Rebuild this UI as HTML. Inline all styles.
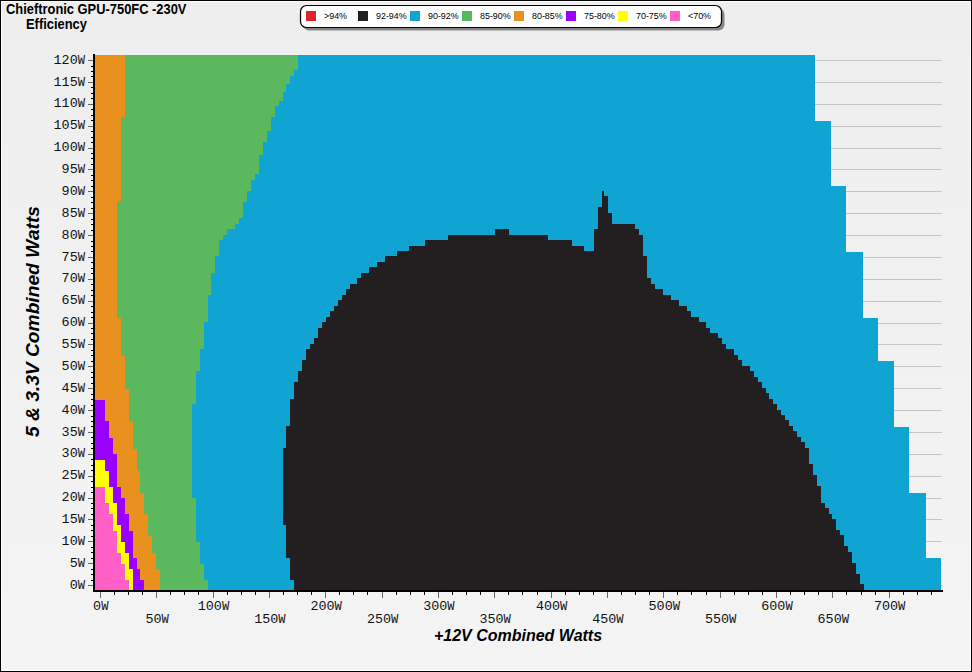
<!DOCTYPE html>
<html><head><meta charset="utf-8"><title>Chieftronic GPU-750FC Efficiency</title>
<style>html,body{margin:0;padding:0;width:972px;height:672px;overflow:hidden;background:#f0f0f0}
body{position:relative;font-family:"Liberation Sans",sans-serif}</style></head>
<body>
<svg width="972" height="672" viewBox="0 0 972 672" style="position:absolute;left:0;top:0">
<defs><linearGradient id="bg" x1="0" y1="0" x2="0" y2="1"><stop offset="0" stop-color="#eeeeee"/><stop offset="1" stop-color="#f4f4f4"/></linearGradient></defs>
<rect x="0" y="0" width="972" height="672" fill="url(#bg)"/>
<rect x="0.5" y="0.5" width="971" height="671" fill="none" stroke="#000" stroke-width="1"/>
<rect x="1.5" y="1.5" width="969" height="669" fill="none" stroke="#fff" stroke-width="1"/>
<g shape-rendering="crispEdges">
<rect x="95" y="585" width="847" height="1" fill="#c4c4c4"/>
<rect x="95" y="563" width="847" height="1" fill="#c4c4c4"/>
<rect x="95" y="541" width="847" height="1" fill="#c4c4c4"/>
<rect x="95" y="519" width="847" height="1" fill="#c4c4c4"/>
<rect x="95" y="498" width="847" height="1" fill="#c4c4c4"/>
<rect x="95" y="476" width="847" height="1" fill="#c4c4c4"/>
<rect x="95" y="454" width="847" height="1" fill="#c4c4c4"/>
<rect x="95" y="432" width="847" height="1" fill="#c4c4c4"/>
<rect x="95" y="410" width="847" height="1" fill="#c4c4c4"/>
<rect x="95" y="388" width="847" height="1" fill="#c4c4c4"/>
<rect x="95" y="366" width="847" height="1" fill="#c4c4c4"/>
<rect x="95" y="344" width="847" height="1" fill="#c4c4c4"/>
<rect x="95" y="323" width="847" height="1" fill="#c4c4c4"/>
<rect x="95" y="301" width="847" height="1" fill="#c4c4c4"/>
<rect x="95" y="279" width="847" height="1" fill="#c4c4c4"/>
<rect x="95" y="257" width="847" height="1" fill="#c4c4c4"/>
<rect x="95" y="235" width="847" height="1" fill="#c4c4c4"/>
<rect x="95" y="213" width="847" height="1" fill="#c4c4c4"/>
<rect x="95" y="191" width="847" height="1" fill="#c4c4c4"/>
<rect x="95" y="169" width="847" height="1" fill="#c4c4c4"/>
<rect x="95" y="148" width="847" height="1" fill="#c4c4c4"/>
<rect x="95" y="126" width="847" height="1" fill="#c4c4c4"/>
<rect x="95" y="104" width="847" height="1" fill="#c4c4c4"/>
<rect x="95" y="82" width="847" height="1" fill="#c4c4c4"/>
<rect x="95" y="60" width="847" height="1" fill="#c4c4c4"/>
</g>
<g shape-rendering="crispEdges">
<path d="M95,55 H815 V121 H831 V186 H846 V252 H863 V318 H878 V361 H894 V427 H909 V493 H926 V558 H941 V590 H95 Z" fill="#10a4d3"/>
<path d="M95,55 H298 V70 H294 V76 H290 V84 H286 V92 H283 V101 H279 V106 H275 V117 H271 V131 H267 V142 H263 V155 H259 V174 H255 V180 H251 V191 H247 V202 H243 V218 H239 V224 H235 V229 H227 V235 H223 V240 H219 V256 H215 V273 H211 V295 H208 V322 H204 V349 H200 V371 H196 V404 H192 V498 H196 V542 H200 V564 H204 V580 H208 V590 H95 Z" fill="#5cb85d"/>
<path d="M95,55 H125 V117 H121 V201 H117 V318 H121 V356 H125 V389 H129 V421 H133 V449 H137 V471 H140 V493 H144 V514 H148 V536 H152 V553 H156 V569 H160 V590 H95 Z" fill="#e8911f"/>
<path d="M95,400 H105 V421 H109 V438 H113 V454 H117 V487 H121 V498 H125 V514 H129 V531 H133 V558 H137 V569 H140 V580 H144 V590 H95 Z" fill="#9900ff"/>
<path d="M95,460 H105 V471 H109 V487 H113 V503 H117 V525 H121 V542 H125 V553 H129 V569 H133 V590 H95 Z" fill="#ffff00"/>
<path d="M95,487 H105 V503 H109 V514 H113 V531 H117 V553 H121 V564 H125 V580 H129 V590 H95 Z" fill="#ff5fc7"/>
<path d="M294,590 V580 H290 V558 H286 V525 H283 V448 H286 V426 H290 V399 H294 V382 H298 V371 H302 V360 H306 V349 H310 V344 H314 V338 H318 V328 H322 V322 H326 V317 H330 V311 H334 V306 H338 V300 H342 V295 H346 V289 H350 V284 H357 V278 H361 V273 H369 V267 H377 V262 H385 V256 H397 V251 H409 V246 H425 V240 H448 V235 H495 V229 H509 V235 H548 V240 H572 V246 H584 V251 H594 V229 H598 V207 H602 V191 H604 V196 H608 V213 H612 V224 H635 V229 H639 V235 H643 V256 H647 V278 H651 V284 H655 V289 H663 V295 H671 V300 H679 V306 H687 V311 H691 V317 H699 V322 H706 V328 H710 V333 H718 V338 H722 V344 H726 V349 H734 V355 H738 V360 H742 V366 H750 V371 H754 V377 H758 V382 H762 V388 H766 V393 H769 V399 H773 V404 H777 V410 H781 V415 H785 V420 H789 V426 H793 V431 H797 V437 H801 V442 H805 V448 H809 V464 H813 V475 H817 V486 H821 V503 H825 V508 H829 V514 H832 V519 H836 V530 H840 V535 H844 V546 H848 V552 H852 V563 H856 V574 H860 V584 H864 V590 Z" fill="#231f20"/>
</g>
<g shape-rendering="crispEdges">
<rect x="93" y="54" width="2" height="538" fill="#000"/>
<rect x="93" y="590" width="850" height="2" fill="#000"/>
<rect x="88" y="585" width="5" height="1" fill="#666"/>
<rect x="91" y="580" width="2" height="1" fill="#000"/>
<rect x="91" y="574" width="2" height="1" fill="#000"/>
<rect x="91" y="569" width="2" height="1" fill="#000"/>
<rect x="88" y="563" width="5" height="1" fill="#666"/>
<rect x="91" y="558" width="2" height="1" fill="#000"/>
<rect x="91" y="552" width="2" height="1" fill="#000"/>
<rect x="91" y="547" width="2" height="1" fill="#000"/>
<rect x="88" y="541" width="5" height="1" fill="#666"/>
<rect x="91" y="536" width="2" height="1" fill="#000"/>
<rect x="91" y="530" width="2" height="1" fill="#000"/>
<rect x="91" y="525" width="2" height="1" fill="#000"/>
<rect x="88" y="519" width="5" height="1" fill="#666"/>
<rect x="91" y="514" width="2" height="1" fill="#000"/>
<rect x="91" y="508" width="2" height="1" fill="#000"/>
<rect x="91" y="503" width="2" height="1" fill="#000"/>
<rect x="88" y="498" width="5" height="1" fill="#666"/>
<rect x="91" y="492" width="2" height="1" fill="#000"/>
<rect x="91" y="487" width="2" height="1" fill="#000"/>
<rect x="91" y="481" width="2" height="1" fill="#000"/>
<rect x="88" y="476" width="5" height="1" fill="#666"/>
<rect x="91" y="470" width="2" height="1" fill="#000"/>
<rect x="91" y="465" width="2" height="1" fill="#000"/>
<rect x="91" y="459" width="2" height="1" fill="#000"/>
<rect x="88" y="454" width="5" height="1" fill="#666"/>
<rect x="91" y="448" width="2" height="1" fill="#000"/>
<rect x="91" y="443" width="2" height="1" fill="#000"/>
<rect x="91" y="437" width="2" height="1" fill="#000"/>
<rect x="88" y="432" width="5" height="1" fill="#666"/>
<rect x="91" y="426" width="2" height="1" fill="#000"/>
<rect x="91" y="421" width="2" height="1" fill="#000"/>
<rect x="91" y="416" width="2" height="1" fill="#000"/>
<rect x="88" y="410" width="5" height="1" fill="#666"/>
<rect x="91" y="405" width="2" height="1" fill="#000"/>
<rect x="91" y="399" width="2" height="1" fill="#000"/>
<rect x="91" y="394" width="2" height="1" fill="#000"/>
<rect x="88" y="388" width="5" height="1" fill="#666"/>
<rect x="91" y="383" width="2" height="1" fill="#000"/>
<rect x="91" y="377" width="2" height="1" fill="#000"/>
<rect x="91" y="372" width="2" height="1" fill="#000"/>
<rect x="88" y="366" width="5" height="1" fill="#666"/>
<rect x="91" y="361" width="2" height="1" fill="#000"/>
<rect x="91" y="355" width="2" height="1" fill="#000"/>
<rect x="91" y="350" width="2" height="1" fill="#000"/>
<rect x="88" y="344" width="5" height="1" fill="#666"/>
<rect x="91" y="339" width="2" height="1" fill="#000"/>
<rect x="91" y="333" width="2" height="1" fill="#000"/>
<rect x="91" y="328" width="2" height="1" fill="#000"/>
<rect x="88" y="323" width="5" height="1" fill="#666"/>
<rect x="91" y="317" width="2" height="1" fill="#000"/>
<rect x="91" y="312" width="2" height="1" fill="#000"/>
<rect x="91" y="306" width="2" height="1" fill="#000"/>
<rect x="88" y="301" width="5" height="1" fill="#666"/>
<rect x="91" y="295" width="2" height="1" fill="#000"/>
<rect x="91" y="290" width="2" height="1" fill="#000"/>
<rect x="91" y="284" width="2" height="1" fill="#000"/>
<rect x="88" y="279" width="5" height="1" fill="#666"/>
<rect x="91" y="273" width="2" height="1" fill="#000"/>
<rect x="91" y="268" width="2" height="1" fill="#000"/>
<rect x="91" y="262" width="2" height="1" fill="#000"/>
<rect x="88" y="257" width="5" height="1" fill="#666"/>
<rect x="91" y="251" width="2" height="1" fill="#000"/>
<rect x="91" y="246" width="2" height="1" fill="#000"/>
<rect x="91" y="241" width="2" height="1" fill="#000"/>
<rect x="88" y="235" width="5" height="1" fill="#666"/>
<rect x="91" y="230" width="2" height="1" fill="#000"/>
<rect x="91" y="224" width="2" height="1" fill="#000"/>
<rect x="91" y="219" width="2" height="1" fill="#000"/>
<rect x="88" y="213" width="5" height="1" fill="#666"/>
<rect x="91" y="208" width="2" height="1" fill="#000"/>
<rect x="91" y="202" width="2" height="1" fill="#000"/>
<rect x="91" y="197" width="2" height="1" fill="#000"/>
<rect x="88" y="191" width="5" height="1" fill="#666"/>
<rect x="91" y="186" width="2" height="1" fill="#000"/>
<rect x="91" y="180" width="2" height="1" fill="#000"/>
<rect x="91" y="175" width="2" height="1" fill="#000"/>
<rect x="88" y="169" width="5" height="1" fill="#666"/>
<rect x="91" y="164" width="2" height="1" fill="#000"/>
<rect x="91" y="158" width="2" height="1" fill="#000"/>
<rect x="91" y="153" width="2" height="1" fill="#000"/>
<rect x="88" y="148" width="5" height="1" fill="#666"/>
<rect x="91" y="142" width="2" height="1" fill="#000"/>
<rect x="91" y="137" width="2" height="1" fill="#000"/>
<rect x="91" y="131" width="2" height="1" fill="#000"/>
<rect x="88" y="126" width="5" height="1" fill="#666"/>
<rect x="91" y="120" width="2" height="1" fill="#000"/>
<rect x="91" y="115" width="2" height="1" fill="#000"/>
<rect x="91" y="109" width="2" height="1" fill="#000"/>
<rect x="88" y="104" width="5" height="1" fill="#666"/>
<rect x="91" y="98" width="2" height="1" fill="#000"/>
<rect x="91" y="93" width="2" height="1" fill="#000"/>
<rect x="91" y="87" width="2" height="1" fill="#000"/>
<rect x="88" y="82" width="5" height="1" fill="#666"/>
<rect x="91" y="76" width="2" height="1" fill="#000"/>
<rect x="91" y="71" width="2" height="1" fill="#000"/>
<rect x="91" y="66" width="2" height="1" fill="#000"/>
<rect x="88" y="60" width="5" height="1" fill="#666"/>
<rect x="100" y="592" width="1" height="6" fill="#666"/>
<rect x="114" y="592" width="1" height="3" fill="#000"/>
<rect x="128" y="592" width="1" height="3" fill="#000"/>
<rect x="142" y="592" width="1" height="3" fill="#000"/>
<rect x="156" y="592" width="1" height="6" fill="#666"/>
<rect x="170" y="592" width="1" height="3" fill="#000"/>
<rect x="184" y="592" width="1" height="3" fill="#000"/>
<rect x="198" y="592" width="1" height="3" fill="#000"/>
<rect x="213" y="592" width="1" height="6" fill="#666"/>
<rect x="227" y="592" width="1" height="3" fill="#000"/>
<rect x="241" y="592" width="1" height="3" fill="#000"/>
<rect x="255" y="592" width="1" height="3" fill="#000"/>
<rect x="269" y="592" width="1" height="6" fill="#666"/>
<rect x="283" y="592" width="1" height="3" fill="#000"/>
<rect x="297" y="592" width="1" height="3" fill="#000"/>
<rect x="311" y="592" width="1" height="3" fill="#000"/>
<rect x="325" y="592" width="1" height="6" fill="#666"/>
<rect x="339" y="592" width="1" height="3" fill="#000"/>
<rect x="353" y="592" width="1" height="3" fill="#000"/>
<rect x="367" y="592" width="1" height="3" fill="#000"/>
<rect x="382" y="592" width="1" height="6" fill="#666"/>
<rect x="396" y="592" width="1" height="3" fill="#000"/>
<rect x="410" y="592" width="1" height="3" fill="#000"/>
<rect x="424" y="592" width="1" height="3" fill="#000"/>
<rect x="438" y="592" width="1" height="6" fill="#666"/>
<rect x="452" y="592" width="1" height="3" fill="#000"/>
<rect x="466" y="592" width="1" height="3" fill="#000"/>
<rect x="480" y="592" width="1" height="3" fill="#000"/>
<rect x="494" y="592" width="1" height="6" fill="#666"/>
<rect x="508" y="592" width="1" height="3" fill="#000"/>
<rect x="522" y="592" width="1" height="3" fill="#000"/>
<rect x="537" y="592" width="1" height="3" fill="#000"/>
<rect x="551" y="592" width="1" height="6" fill="#666"/>
<rect x="565" y="592" width="1" height="3" fill="#000"/>
<rect x="579" y="592" width="1" height="3" fill="#000"/>
<rect x="593" y="592" width="1" height="3" fill="#000"/>
<rect x="607" y="592" width="1" height="6" fill="#666"/>
<rect x="621" y="592" width="1" height="3" fill="#000"/>
<rect x="635" y="592" width="1" height="3" fill="#000"/>
<rect x="649" y="592" width="1" height="3" fill="#000"/>
<rect x="663" y="592" width="1" height="6" fill="#666"/>
<rect x="677" y="592" width="1" height="3" fill="#000"/>
<rect x="691" y="592" width="1" height="3" fill="#000"/>
<rect x="706" y="592" width="1" height="3" fill="#000"/>
<rect x="720" y="592" width="1" height="6" fill="#666"/>
<rect x="734" y="592" width="1" height="3" fill="#000"/>
<rect x="748" y="592" width="1" height="3" fill="#000"/>
<rect x="762" y="592" width="1" height="3" fill="#000"/>
<rect x="776" y="592" width="1" height="6" fill="#666"/>
<rect x="790" y="592" width="1" height="3" fill="#000"/>
<rect x="804" y="592" width="1" height="3" fill="#000"/>
<rect x="818" y="592" width="1" height="3" fill="#000"/>
<rect x="832" y="592" width="1" height="6" fill="#666"/>
<rect x="846" y="592" width="1" height="3" fill="#000"/>
<rect x="861" y="592" width="1" height="3" fill="#000"/>
<rect x="875" y="592" width="1" height="3" fill="#000"/>
<rect x="889" y="592" width="1" height="6" fill="#666"/>
<rect x="903" y="592" width="1" height="3" fill="#000"/>
<rect x="917" y="592" width="1" height="3" fill="#000"/>
<rect x="931" y="592" width="1" height="3" fill="#000"/>
</g>
<g font-family="Liberation Mono, monospace" font-size="13.4" fill="#111">
<text x="85" y="63.6" text-anchor="end">120<tspan font-size="12.2">W</tspan></text>
<text x="85" y="85.5" text-anchor="end">115<tspan font-size="12.2">W</tspan></text>
<text x="85" y="107.4" text-anchor="end">110<tspan font-size="12.2">W</tspan></text>
<text x="85" y="129.3" text-anchor="end">105<tspan font-size="12.2">W</tspan></text>
<text x="85" y="151.1" text-anchor="end">100<tspan font-size="12.2">W</tspan></text>
<text x="85" y="173.0" text-anchor="end">95<tspan font-size="12.2">W</tspan></text>
<text x="85" y="194.9" text-anchor="end">90<tspan font-size="12.2">W</tspan></text>
<text x="85" y="216.8" text-anchor="end">85<tspan font-size="12.2">W</tspan></text>
<text x="85" y="238.6" text-anchor="end">80<tspan font-size="12.2">W</tspan></text>
<text x="85" y="260.5" text-anchor="end">75<tspan font-size="12.2">W</tspan></text>
<text x="85" y="282.4" text-anchor="end">70<tspan font-size="12.2">W</tspan></text>
<text x="85" y="304.3" text-anchor="end">65<tspan font-size="12.2">W</tspan></text>
<text x="85" y="326.1" text-anchor="end">60<tspan font-size="12.2">W</tspan></text>
<text x="85" y="348.0" text-anchor="end">55<tspan font-size="12.2">W</tspan></text>
<text x="85" y="369.9" text-anchor="end">50<tspan font-size="12.2">W</tspan></text>
<text x="85" y="391.8" text-anchor="end">45<tspan font-size="12.2">W</tspan></text>
<text x="85" y="413.6" text-anchor="end">40<tspan font-size="12.2">W</tspan></text>
<text x="85" y="435.5" text-anchor="end">35<tspan font-size="12.2">W</tspan></text>
<text x="85" y="457.4" text-anchor="end">30<tspan font-size="12.2">W</tspan></text>
<text x="85" y="479.3" text-anchor="end">25<tspan font-size="12.2">W</tspan></text>
<text x="85" y="501.1" text-anchor="end">20<tspan font-size="12.2">W</tspan></text>
<text x="85" y="523.0" text-anchor="end">15<tspan font-size="12.2">W</tspan></text>
<text x="85" y="544.9" text-anchor="end">10<tspan font-size="12.2">W</tspan></text>
<text x="85" y="566.8" text-anchor="end">5<tspan font-size="12.2">W</tspan></text>
<text x="85" y="588.6" text-anchor="end">0<tspan font-size="12.2">W</tspan></text>
<text x="100.8" y="610.1" text-anchor="middle">0<tspan font-size="12.2">W</tspan></text>
<text x="157.2" y="623.1" text-anchor="middle">50<tspan font-size="12.2">W</tspan></text>
<text x="213.5" y="610.1" text-anchor="middle">100<tspan font-size="12.2">W</tspan></text>
<text x="269.9" y="623.1" text-anchor="middle">150<tspan font-size="12.2">W</tspan></text>
<text x="326.2" y="610.1" text-anchor="middle">200<tspan font-size="12.2">W</tspan></text>
<text x="382.6" y="623.1" text-anchor="middle">250<tspan font-size="12.2">W</tspan></text>
<text x="438.9" y="610.1" text-anchor="middle">300<tspan font-size="12.2">W</tspan></text>
<text x="495.2" y="623.1" text-anchor="middle">350<tspan font-size="12.2">W</tspan></text>
<text x="551.6" y="610.1" text-anchor="middle">400<tspan font-size="12.2">W</tspan></text>
<text x="607.9" y="623.1" text-anchor="middle">450<tspan font-size="12.2">W</tspan></text>
<text x="664.3" y="610.1" text-anchor="middle">500<tspan font-size="12.2">W</tspan></text>
<text x="720.6" y="623.1" text-anchor="middle">550<tspan font-size="12.2">W</tspan></text>
<text x="777.0" y="610.1" text-anchor="middle">600<tspan font-size="12.2">W</tspan></text>
<text x="833.3" y="623.1" text-anchor="middle">650<tspan font-size="12.2">W</tspan></text>
<text x="889.7" y="610.1" text-anchor="middle">700<tspan font-size="12.2">W</tspan></text>
</g>
<text transform="translate(6,13.8) scale(1,1.13)" x="0" y="0" font-family="Liberation Sans, sans-serif" font-weight="bold" font-size="12.9" fill="#000">Chieftronic GPU-750FC -230V</text>
<text transform="translate(26,28.9) scale(1,1.13)" x="0" y="0" font-family="Liberation Sans, sans-serif" font-weight="bold" font-size="12.9" fill="#000">Efficiency</text>
<text x="518" y="641" text-anchor="middle" font-family="Liberation Sans, sans-serif" font-weight="bold" font-style="italic" font-size="16" fill="#000">+12V Combined Watts</text>
<text transform="translate(39.2,321.5) rotate(-90)" x="0" y="0" text-anchor="middle" font-family="Liberation Sans, sans-serif" font-weight="bold" font-style="italic" font-size="19.2" fill="#000">5 &amp; 3.3V Combined Watts</text>
<rect x="303" y="8.5" width="421.5" height="22" rx="6" ry="6" fill="#858585"/>
<rect x="300.5" y="5.5" width="421" height="22" rx="6" ry="6" fill="#fff" stroke="#000" stroke-width="1.2"/>
<rect x="306" y="11" width="10" height="10" fill="#e2212b" shape-rendering="crispEdges"/>
<text transform="translate(324,18.8) scale(1,1.1)" x="0" y="0" font-family="Liberation Sans, sans-serif" font-size="8.9" fill="#000">&gt;94%</text>
<rect x="358" y="11" width="10" height="10" fill="#231f20" shape-rendering="crispEdges"/>
<text transform="translate(376,18.8) scale(1,1.1)" x="0" y="0" font-family="Liberation Sans, sans-serif" font-size="8.9" fill="#000">92-94%</text>
<rect x="410" y="11" width="10" height="10" fill="#10a4d3" shape-rendering="crispEdges"/>
<text transform="translate(428,18.8) scale(1,1.1)" x="0" y="0" font-family="Liberation Sans, sans-serif" font-size="8.9" fill="#000">90-92%</text>
<rect x="462" y="11" width="10" height="10" fill="#5cb85d" shape-rendering="crispEdges"/>
<text transform="translate(480,18.8) scale(1,1.1)" x="0" y="0" font-family="Liberation Sans, sans-serif" font-size="8.9" fill="#000">85-90%</text>
<rect x="514" y="11" width="10" height="10" fill="#e8911f" shape-rendering="crispEdges"/>
<text transform="translate(532,18.8) scale(1,1.1)" x="0" y="0" font-family="Liberation Sans, sans-serif" font-size="8.9" fill="#000">80-85%</text>
<rect x="566" y="11" width="10" height="10" fill="#9900ff" shape-rendering="crispEdges"/>
<text transform="translate(584,18.8) scale(1,1.1)" x="0" y="0" font-family="Liberation Sans, sans-serif" font-size="8.9" fill="#000">75-80%</text>
<rect x="618" y="11" width="10" height="10" fill="#ffff00" shape-rendering="crispEdges"/>
<text transform="translate(636,18.8) scale(1,1.1)" x="0" y="0" font-family="Liberation Sans, sans-serif" font-size="8.9" fill="#000">70-75%</text>
<rect x="670" y="11" width="10" height="10" fill="#ff5fc7" shape-rendering="crispEdges"/>
<text transform="translate(688,18.8) scale(1,1.1)" x="0" y="0" font-family="Liberation Sans, sans-serif" font-size="8.9" fill="#000">&lt;70%</text>
</svg>
</body></html>
